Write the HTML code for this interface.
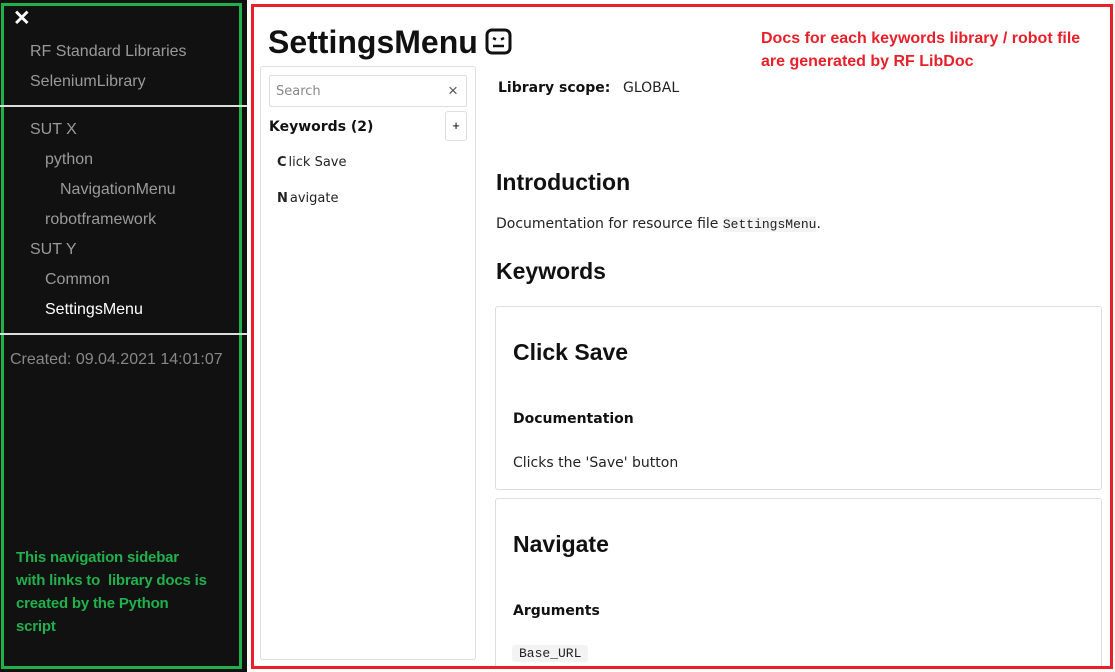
<!DOCTYPE html>
<html><head><meta charset="utf-8"><style>
*{margin:0;padding:0;box-sizing:border-box}
html,body{width:1115px;height:672px;overflow:hidden}
body{background:#fff;font-family:"Liberation Sans",sans-serif;position:relative}
.a{position:absolute;white-space:nowrap}
.sb{position:absolute;left:0;top:0;width:247px;height:672px;background:#111}
.nav{color:#9a9a9a;font-size:16px}
.hr{position:absolute;left:0;width:247px;height:2px;background:#ddd}
.dv{font-family:"DejaVu Sans","Liberation Sans",sans-serif}
.lb{font-family:"Liberation Sans",sans-serif;font-weight:bold;color:#111}
.card{position:absolute;border:1px solid #ddd;border-radius:3px;background:#fff}
</style></head><body>
<div class="sb"></div>
<div class="a" style="left:1px;top:3px;width:241px;height:666px;border:3px solid #22b04c"></div>
<div class="a" style="left:13px;top:6px;color:#fff;font-size:21px;font-weight:bold">✕</div>
<div class="a nav" style="left:30px;top:43px">RF Standard Libraries</div>
<div class="a nav" style="left:30px;top:73px">SeleniumLibrary</div>
<div class="hr" style="top:105px"></div>
<div class="a nav" style="left:30px;top:121px">SUT X</div>
<div class="a nav" style="left:45px;top:151px">python</div>
<div class="a nav" style="left:60px;top:181px">NavigationMenu</div>
<div class="a nav" style="left:45px;top:211px">robotframework</div>
<div class="a nav" style="left:30px;top:241px">SUT Y</div>
<div class="a nav" style="left:45px;top:271px">Common</div>
<div class="a nav" style="left:45px;top:301px;color:#fff">SettingsMenu</div>
<div class="hr" style="top:333px"></div>
<div class="a nav" style="left:10px;top:351px;color:#888">Created: 09.04.2021 14:01:07</div>
<div class="a" style="left:16px;top:546px;color:#22b04c;font-size:15px;font-weight:bold;line-height:23px;letter-spacing:-0.2px">This navigation sidebar<br>with links to&nbsp; library docs is<br>created by the Python<br>script</div>

<div class="a" style="left:260px;top:66px;width:216px;height:594px;border:1px solid #ddd;border-radius:3px"></div>
<div class="a" style="left:269px;top:75px;width:198px;height:32px;border:1px solid #ddd;border-radius:2px"></div>
<div class="a dv" style="left:276px;top:84px;font-size:13px;color:#888">Search</div>
<div class="a" style="left:448px;top:81px;font-size:17px;color:#555">×</div>
<div class="a dv" style="left:269px;top:119px;font-size:14px;font-weight:bold;color:#111">Keywords (2)</div>
<div class="a" style="left:445px;top:111px;width:22px;height:30px;border:1px solid #ddd;border-radius:3px;text-align:center;line-height:28px;font-size:13px">+</div>
<div class="a dv" style="left:277px;top:155px;font-size:13px;color:#222"><b>C</b><span style="margin-left:2px">lick Save</span></div>
<div class="a dv" style="left:277px;top:191px;font-size:13px;color:#222"><b>N</b><span style="margin-left:2px">avigate</span></div>

<div class="a lb" style="left:268px;top:24px;font-size:32px">SettingsMenu</div>
<svg class="a" style="left:485px;top:28px" width="28" height="28" viewBox="0 0 28 28"><rect x="2" y="2" width="23" height="23" rx="5" fill="none" stroke="#111" stroke-width="3"/><path d="M8 10 L11 11.5 M19 10 L16 11.5 M8 18 H19" stroke="#111" stroke-width="2.5" fill="none"/></svg>
<div class="a" style="left:761px;top:27px;color:#e8202a;font-size:16px;font-weight:bold;line-height:23px">Docs for each keywords library / robot file<br>are generated by RF LibDoc</div>

<div class="a dv" style="left:498px;top:80px;font-size:14px;color:#111"><b>Library scope:</b></div>
<div class="a dv" style="left:623px;top:80px;font-size:14px;color:#222">GLOBAL</div>
<div class="a lb" style="left:496px;top:169px;font-size:23px">Introduction</div>
<div class="a dv" style="left:496px;top:216px;font-size:14px;color:#222">Documentation for resource file <span style="font-family:'Liberation Mono',monospace;font-size:13px;background:#f3f3f3">SettingsMenu</span>.</div>
<div class="a lb" style="left:496px;top:258px;font-size:23px">Keywords</div>

<div class="card" style="left:495px;top:306px;width:607px;height:184px"></div>
<div class="a lb" style="left:513px;top:339px;font-size:23px">Click Save</div>
<div class="a dv" style="left:513px;top:411px;font-size:14px;font-weight:bold;color:#111">Documentation</div>
<div class="a dv" style="left:513px;top:455px;font-size:14px;color:#222">Clicks the 'Save' button</div>

<div class="card" style="left:495px;top:498px;width:607px;height:170px"></div>
<div class="a lb" style="left:513px;top:531px;font-size:23px">Navigate</div>
<div class="a dv" style="left:513px;top:603px;font-size:14px;font-weight:bold;color:#111">Arguments</div>
<div class="a" style="left:512px;top:645px;padding:1px 7px;background:#f3f3f3;border-radius:3px;font-family:'Liberation Mono',monospace;font-size:13px;color:#222">Base_URL</div>

<div class="a" style="left:251px;top:4px;width:862px;height:665px;border:3px solid #e8202a"></div>
</body></html>
